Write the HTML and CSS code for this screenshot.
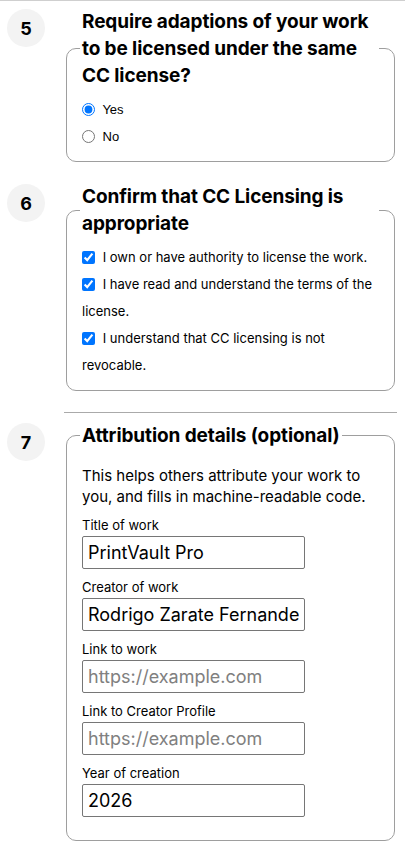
FILE: index.html
```html
<!DOCTYPE html>
<html lang="en">
<head>
    <meta charset="UTF-8">
    <meta name="viewport" content="width=device-width, initial-scale=1.0">
    <title>License chooser</title>
    <link rel="stylesheet" href="styles.css">
</head>
<body>
    <div class="top-rule"></div>

    <ol class="steps">
        <li class="step">
            <span class="step-num">5</span>
            <fieldset class="step-box">
                <legend>Require adaptions of your work to be licensed under the same CC license?</legend>
                <label class="choice"><input type="radio" name="share-alike" checked> Yes</label>
                <label class="choice"><input type="radio" name="share-alike"> No</label>
            </fieldset>
        </li>

        <li class="step">
            <span class="step-num">6</span>
            <fieldset class="step-box">
                <legend>Confirm that CC Licensing is appropriate</legend>
                <label class="confirm"><input type="checkbox" checked> I own or have authority to license the work.</label>
                <label class="confirm"><input type="checkbox" checked> I have read and understand the terms of the license.</label>
                <label class="confirm"><input type="checkbox" checked> I understand that CC licensing is not revocable.</label>
            </fieldset>
        </li>

        <li class="divider"></li>

        <li class="step">
            <span class="step-num">7</span>
            <fieldset class="step-box attribution">
                <legend>Attribution details (optional)</legend>
                <p class="hint">This helps others attribute your work to you, and fills in machine-readable code.</p>

                <label class="field-label" for="title">Title of work</label>
                <input class="field" id="title" type="text" value="PrintVault Pro">

                <label class="field-label" for="creator">Creator of work</label>
                <input class="field" id="creator" type="text" value="Rodrigo Zarate Fernandez">

                <label class="field-label" for="work-link">Link to work</label>
                <input class="field" id="work-link" type="text" placeholder="https://example.com">

                <label class="field-label" for="creator-link">Link to Creator Profile</label>
                <input class="field" id="creator-link" type="text" placeholder="https://example.com">

                <label class="field-label" for="year">Year of creation</label>
                <input class="field" id="year" type="text" value="2026">
            </fieldset>
        </li>
    </ol>
</body>
</html>
```

FILE: styles.css
```css
body {
    margin: 0;
    background-color: #fff;
    color: #000;
    font-family: Inter, "Noto Sans", sans-serif;
}

.top-rule {
    border-top: 1px solid #cfcfcf;
}

.steps {
    list-style: none;
    margin: 0;
    padding: 7px 10px 0 7px;
}

.step {
    display: flex;
    gap: 21px;
    margin-bottom: 21px;
}

.step-num {
    flex: none;
    width: 38px;
    height: 38px;
    margin-top: 1px;
    border-radius: 50%;
    background-color: #f3f3f3;
    display: flex;
    align-items: center;
    justify-content: center;
    font-size: 18px;
    font-weight: 700;
}

.step-box {
    flex: 1;
    min-width: 0;
    margin: 0;
    padding: 7px 15px 11px;
    border: 1px solid #9e9e9e;
    border-radius: 10px;
}

.step-box legend {
    margin-left: -2px;
    padding: 0 2px;
    font-size: 19px;
    font-weight: 700;
    line-height: 27px;
    letter-spacing: -0.1px;
}

.choice {
    display: block;
    font-family: "Liberation Sans", Arial, sans-serif;
    font-size: 13px;
    line-height: 27px;
}

.choice input {
    margin: 0 4px 0 0;
    vertical-align: -2px;
}

.confirm {
    display: block;
    font-size: 13px;
    line-height: 27px;
}

.confirm input {
    margin: 0 4px 0 0;
    vertical-align: -2px;
}

.divider {
    margin: 0 -2px 9px 57px;
    border-top: 1px solid #aaa;
}

.attribution {
    padding-bottom: 23px;
}

.hint {
    margin: 9px 0 8px;
    font-size: 15px;
    line-height: 21px;
}

.field-label {
    display: block;
    margin-top: 8px;
    font-size: 13px;
    line-height: 20px;
}

.field {
    display: block;
    box-sizing: border-box;
    width: 223px;
    height: 33px;
    margin: 1px 0 0;
    padding: 0 5px;
    border: 1px solid #767676;
    border-radius: 2px;
    font-family: inherit;
    font-size: 18px;
    color: #000;
}

.field::placeholder {
    color: #808080;
}
```
